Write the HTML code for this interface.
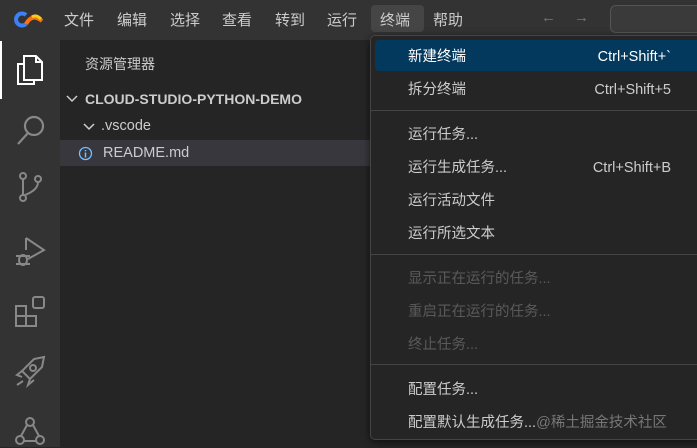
<!DOCTYPE html>
<html><head><meta charset="utf-8"><style>
*{margin:0;padding:0;box-sizing:border-box}
body{width:697px;height:447px;overflow:hidden;background:#252526;font-family:"Liberation Sans","Noto Sans CJK SC",sans-serif;position:relative;color:#ccc}
.title{position:absolute;left:0;top:0;width:697px;height:40px;background:#333}
.mi{position:absolute;top:9px;font-size:15px;color:#ccc}
.act{position:absolute;left:0;top:40px;width:60px;height:407px;background:#333}
.side{position:absolute;left:60px;top:40px;width:637px;height:407px;background:#252526}
.t{position:absolute;font-size:14px;color:#ccc;white-space:nowrap}
.menu{position:absolute;left:370px;top:35px;width:340px;height:405px;background:#252526;border:1px solid #454545;border-radius:5px;box-shadow:0 2px 8px rgba(0,0,0,.6)}
.it{position:absolute;left:37px;font-size:14.5px;line-height:20px;color:#ccc;white-space:nowrap}
.sc{position:absolute;right:38px;font-size:14.5px;line-height:20px;color:#ccc}
.dis{color:#5a5a5a}
.sep{position:absolute;left:0;width:340px;height:1px;background:#454545}
svg{position:absolute}
</style></head><body>
<div class="title"></div>
<svg style="left:14px;top:9px" width="32" height="20" viewBox="0 0 32 20"><path d="M12 6 A6 6 0 1 0 12 15" stroke="#3b82f6" stroke-width="4" fill="none"/><path d="M12 15 Q18 4 28 12" stroke="#f97316" stroke-width="4" fill="none"/><path d="M18 8 Q22 5 27 10" stroke="#facc15" stroke-width="3" fill="none"/></svg>
<div class="mi" style="left:64px">文件</div>
<div class="mi" style="left:117px">编辑</div>
<div class="mi" style="left:170px">选择</div>
<div class="mi" style="left:222px">查看</div>
<div class="mi" style="left:275px">转到</div>
<div class="mi" style="left:327px">运行</div>
<div style="position:absolute;left:371px;top:5px;width:53px;height:27px;background:#454545;border-radius:4px"></div>
<div class="mi" style="left:380px">终端</div>
<div class="mi" style="left:433px">帮助</div>
<div class="mi" style="left:541px;color:#777">←</div>
<div class="mi" style="left:574px;color:#777">→</div>
<div style="position:absolute;left:610px;top:5px;width:100px;height:28px;border:1px solid #555;border-radius:6px;background:#3a3a3a"></div>
<div class="act"></div>
<div style="position:absolute;left:0;top:41px;width:2px;height:58px;background:#fff"></div>
<svg style="left:14px;top:52px" width="32" height="36" viewBox="0 0 32 36" fill="none" stroke="#fff" stroke-width="2"><path d="M10 4h12l6 6v18H10z M22 4v6h6"/><path d="M10 12H4v20h16v-4"/></svg>
<svg style="left:14px;top:113px" width="34" height="34" viewBox="0 0 34 34" fill="none" stroke="#888" stroke-width="2.2"><circle cx="20" cy="13" r="9"/><path d="M14 20L4 31"/></svg>
<svg style="left:14px;top:170px" width="30" height="40" viewBox="0 0 30 40" fill="none" stroke="#888" stroke-width="2"><circle cx="9" cy="6" r="3"/><circle cx="24" cy="9" r="3"/><circle cx="9" cy="28" r="3"/><path d="M9 9v16M24 12q0 8-13 13"/></svg>
<svg style="left:14px;top:236px" width="34" height="32" viewBox="0 0 34 32" fill="none" stroke="#888" stroke-width="2"><path d="M12 2l18 12-16 9"/><path d="M12 2v12"/><ellipse cx="9" cy="24" rx="4" ry="5"/><path d="M2 20h14M2 28h14"/></svg>
<svg style="left:14px;top:296px" width="34" height="34" viewBox="0 0 34 34" fill="none" stroke="#888" stroke-width="2"><rect x="2" y="10" width="10" height="10"/><rect x="2" y="20" width="10" height="10"/><rect x="12" y="20" width="10" height="10"/><rect x="19" y="1" width="11" height="11" rx="2"/></svg>
<svg style="left:14px;top:355px" width="34" height="34" viewBox="0 0 34 34" fill="none" stroke="#888" stroke-width="2"><path d="M30 2L20 4 8 16l8 8 12-12z"/><circle cx="19" cy="13" r="3"/><path d="M8 16l-5 4 5 2M16 24l-2 6 6-5M3 30l6-4"/></svg>
<svg style="left:14px;top:414px" width="34" height="34" viewBox="0 0 34 34" fill="none" stroke="#888" stroke-width="2"><circle cx="16" cy="8" r="4"/><circle cx="6" cy="26" r="4"/><circle cx="26" cy="26" r="4"/><path d="M13 11L7 22M19 11l6 11M10 27h12"/></svg>
<div class="side"></div>
<div class="t" style="left:85px;top:54px;font-size:14px">资源管理器</div>
<svg style="left:66px;top:94px" width="12" height="10"><path d="M1 2l5 5 5-5" stroke="#ccc" stroke-width="1.5" fill="none"/></svg>
<div class="t" style="left:85px;top:91px;font-weight:bold;font-size:14px">CLOUD-STUDIO-PYTHON-DEMO</div>
<svg style="left:83px;top:122px" width="12" height="10"><path d="M1 2l5 5 5-5" stroke="#ccc" stroke-width="1.5" fill="none"/></svg>
<div class="t" style="left:101px;top:118px;font-size:14.5px">.vscode</div>
<div style="position:absolute;left:60px;top:140px;width:320px;height:26px;background:#37373d"></div>
<svg style="left:78px;top:146px" width="15" height="15"><circle cx="7.5" cy="7.5" r="6" stroke="#75beff" stroke-width="1.3" fill="none"/><path d="M7.5 6.5v5M7.5 4v1.2" stroke="#75beff" stroke-width="1.5"/></svg>
<div class="t" style="left:103px;top:145px;font-size:14.5px">README.md</div>
<div class="menu">
<div style="position:absolute;left:4px;top:4px;width:340px;height:31px;background:#04395e;border-radius:4px"></div>
<div class="it" style="top:11px;color:#fff">新建终端</div><div class="sc" style="top:11px;color:#fff">Ctrl+Shift+`</div>
<div class="it" style="top:44px">拆分终端</div><div class="sc" style="top:44px">Ctrl+Shift+5</div>
<div class="sep" style="top:74px"></div>
<div class="it" style="top:89px">运行任务...</div>
<div class="it" style="top:122px">运行生成任务...</div><div class="sc" style="top:122px">Ctrl+Shift+B</div>
<div class="it" style="top:155px">运行活动文件</div>
<div class="it" style="top:188px">运行所选文本</div>
<div class="sep" style="top:218px"></div>
<div class="it dis" style="top:233px">显示正在运行的任务...</div>
<div class="it dis" style="top:266px">重启正在运行的任务...</div>
<div class="it dis" style="top:299px">终止任务...</div>
<div class="sep" style="top:328px"></div>
<div class="it" style="top:344px">配置任务...</div>
<div class="it" style="top:377px">配置默认生成任务...<span style="color:#777">@稀土掘金技术社区</span></div>
</div>
</body></html>
